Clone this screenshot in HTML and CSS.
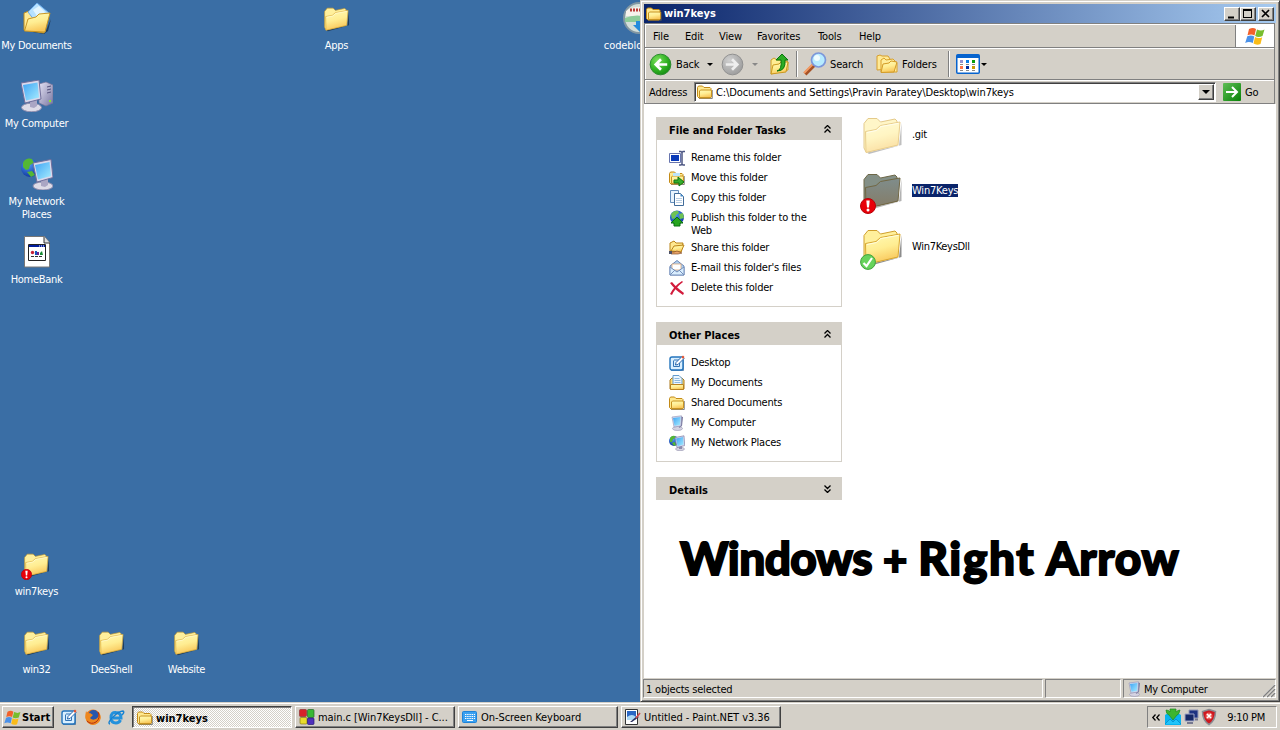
FILE: index.html
```html
<!DOCTYPE html>
<html lang="en">
<head>
<meta charset="utf-8">
<title>win7keys</title>
<link rel="stylesheet" href="styles.css">
</head>
<body>
<svg class="defs" width="0" height="0" aria-hidden="true">
  <defs>
    <linearGradient id="gFolder" x1="0" y1="0" x2="0.3" y2="1"><stop offset="0" stop-color="#fffbb8"/><stop offset=".55" stop-color="#ffed92"/><stop offset="1" stop-color="#f9c85c"/></linearGradient>
    <linearGradient id="gDark" x1="0" y1="0" x2="0" y2="1"><stop offset="0" stop-color="#7f8d8c"/><stop offset="1" stop-color="#857c66"/></linearGradient>
    <linearGradient id="gScreen" x1="0" y1="0" x2="1" y2="1"><stop offset="0" stop-color="#3fa4f4"/><stop offset="1" stop-color="#a6ecff"/></linearGradient>
    <linearGradient id="gCase" x1="0" y1="0" x2="1" y2="1"><stop offset="0" stop-color="#e6e4f6"/><stop offset="1" stop-color="#77759f"/></linearGradient>
    <radialGradient id="gGlobe" cx=".4" cy=".3" r=".8"><stop offset="0" stop-color="#4f9cf6"/><stop offset="1" stop-color="#0a2c96"/></radialGradient>
    <radialGradient id="gGreen" cx=".35" cy=".3" r=".8"><stop offset="0" stop-color="#7be05c"/><stop offset=".6" stop-color="#2fb021"/><stop offset="1" stop-color="#128612"/></radialGradient>
    <radialGradient id="gGrey" cx=".35" cy=".3" r=".8"><stop offset="0" stop-color="#cfcfcf"/><stop offset="1" stop-color="#999"/></radialGradient>
    <linearGradient id="gGo" x1="0" y1="0" x2="1" y2="1"><stop offset="0" stop-color="#5fbd55"/><stop offset="1" stop-color="#078207"/></linearGradient>
  </defs>
  <symbol id="folder" viewBox="0 0 40 38">
    <path d="M4 35.5 36 28.500 38.500 6v22L6 37z" fill="#000" opacity=".45"/>
    <path d="M1 6.500 5 1.500h9l3.500 3.500L32 2l2 2v24L3 35 1 31z" fill="#fff09c" stroke="#cf9f2c"/>
    <path d="M2.500 14.500 13 12.500l4.500-4L37 5l-2 23L3 35.500z" fill="url(#gFolder)" stroke="#d8a731"/>
    <path d="M4 15.500 13.500 13.500l4.500-4L35.500 6.300" fill="none" stroke="#fffde0"/>
  </symbol>
  <symbol id="folder-dark" viewBox="0 0 40 38">
    <path d="M4 35.500 36 28.500 38.500 6v22L6 37z" fill="#000" opacity=".3"/>
    <path d="M1 6.500 5 1.500h9l3.500 3.500L32 2l2 2v24L3 35 1 31z" fill="#849087" stroke="#6e6848"/>
    <path d="M2.500 14.500 13 12.500l4.500-4L37 5l-2 23L3 35.500z" fill="url(#gDark)" stroke="#716743"/>
  </symbol>
  <symbol id="sfolder" viewBox="0 0 16 16">
    <path d="M2 14.500h13.300V6" fill="none" stroke="#555" opacity=".7"/>
    <path d="M.5 12.500v-9l1-1.500h4l1.500 1.500h6l1 1v8l-1 1.500H2z" fill="#ffe990" stroke="#c38a17"/>
    <path d="M2.500 13.500V7l1-1h10.500l.5 1v6l-.5.500z" fill="url(#gFolder)" stroke="#c89422"/>
  </symbol>
  <symbol id="alert" viewBox="0 0 16 16">
    <circle cx="8" cy="8" r="7.500" fill="#e80009" stroke="#b80007"/><path d="M6.300 2.500h3.400L9 9.500H7z" fill="#fff"/><circle cx="8" cy="12" r="1.500" fill="#fff"/>
  </symbol>
  <symbol id="check" viewBox="0 0 16 16">
    <circle cx="8" cy="8" r="7.400" fill="#67d35c" stroke="#42a33d"/><path d="M3.500 9 6.500 12 12 4" fill="none" stroke="#fff" stroke-width="2.200"/>
  </symbol>
  <symbol id="docs" viewBox="0 0 32 32">
    <path d="M6 29 24 31l6-14-3 12-4 3z" opacity=".45"/>
    <path d="M3 28V11l5-2 5 2 12-2 3 3-5 19z" fill="#ffe993" stroke="#b98b21"/>
    <path d="M7 10 16 1l12 10-11 12z" fill="#b6e1ff" stroke="#6cabea"/><path d="m12 8 6-4 6 6-6 7z" fill="#e2f5ff"/>
    <path d="M3.500 29 7 17l8-2 3-3 11-1-5 19z" fill="url(#gFolder)" stroke="#c99623"/>
  </symbol>
  <symbol id="computer" viewBox="0 0 32 32">
    <path d="M18 4l7-2 7 3v18l-7 3-7-3z" fill="url(#gCase)" stroke="#777399" stroke-width=".7"/><path d="m26 7 4-1M26 10l4-1M26 13l4-1" stroke="#55527d"/><path d="M28 20h2v2h-2z" fill="#8bea25"/>
    <ellipse cx="10.500" cy="27.500" rx="10" ry="4.300" fill="#dddbe7" stroke="#918eae"/><path d="m9 20 7-1v7l-3 2-4-1z" fill="#aaa6c4"/>
    <path d="M0 3 18 0l2 19-16 4z" fill="#d9d8ec" stroke="#716f9b"/><path d="M2 5 16.500 2.500 18 17.500 5 20.500z" fill="url(#gScreen)"/>
  </symbol>
  <symbol id="network" viewBox="0 0 32 32">
    <circle cx="9" cy="10" r="9" fill="url(#gGlobe)"/><path d="M2 5c2-5 7-5 9-4l2 4-4 2-1 4-3 1-3-3zm4 9 5-1 3 4-4 2z" fill="#54b734"/>
    <ellipse cx="22" cy="28" rx="10" ry="4" fill="#dddbe7" stroke="#918eae"/><path d="m20 21 7-1v7l-3 2-4-1z" fill="#aaa6c4"/>
    <path d="M12 5 30 1.500l2 18L16 24z" fill="#d9d8ec" stroke="#716f9b"/><path d="M14 7 28.500 4 30 18l-13 3.500z" fill="url(#gScreen)"/>
  </symbol>
  <symbol id="snet" viewBox="0 0 16 16">
    <circle cx="5" cy="6" r="5" fill="url(#gGlobe)"/><path d="M1 3q2-3 5-2l1 2-3 1-1 3-2 0zm2 5 3-1 1 3-2 1z" fill="#54b734"/>
    <ellipse cx="11" cy="14" rx="4.500" ry="1.700" fill="#d5d3e2" stroke="#9693af" stroke-width=".6"/><path d="M10 11h3v3h-3z" fill="#8c8bac"/>
    <path d="M6 2.500 15 .8l.7 9.800L8 12.500z" fill="#d6dbf0" stroke="#7f7da6" stroke-width=".7"/><path d="m7 3.500 7-1.400.6 7.500-6 1.600z" fill="url(#gScreen)"/>
  </symbol>
  <symbol id="spc" viewBox="0 0 16 16">
    <ellipse cx="8.500" cy="13.500" rx="5" ry="2" fill="#d5d3e2" stroke="#9693af" stroke-width=".6"/><path d="M12 1.500l2 .5-1 9-3 2z" fill="#77769c"/><path d="M3 2 12.500.8 12 11 5 12z" fill="#d6dbf0" stroke="#9190b4" stroke-width=".6"/><path d="M4 3l7.500-1L11 10l-5.500.800z" fill="url(#gScreen)"/>
  </symbol>
  <symbol id="winflag" viewBox="0 0 20 18">
    <path d="M4 2q4-2 7 0L9.500 8.500q-3-2-7-.2z" fill="#f2612b"/><path d="M12 2.500q4 2 7.500 0L17.500 9q-4 2-7.300 0z" fill="#77bd2e"/><path d="M2.300 9.200q4-1.600 7 .2L7.800 16q-4-2-7.600 0z" fill="#4a91e9"/><path d="M10 10q3.500 2 7.200.2L15.500 17q-4 1.500-7-.5z" fill="#fabc19"/>
  </symbol>
  <symbol id="deskicon" viewBox="0 0 16 16">
    <path d="M2 15.500h12.500V5" fill="none" stroke="#174b83" opacity=".6"/>
    <rect x="1" y="2" width="13" height="13" rx="2" fill="#d9efff" stroke="#2374bd" stroke-width="1.400"/><path d="M5 5h5M4.500 5.500v6h6V8" fill="none" stroke="#3575b5"/><path d="m6.500 10 .5-2.500L13 1.500 15 3.500 9 9.500z" fill="#fff" stroke="#2665ac"/><path d="m12.500 2 1.500-1.500 1.500 1.500L14 4z" fill="#e6512c"/>
  </symbol>
  <symbol id="chev" viewBox="0 0 8 8"><path d="M.5 3.500 3.500.5l3 3M.5 7.500 3.500 4.500l3 3" fill="none" stroke="#000" stroke-width="1.300"/></symbol>
</svg>

<main class="desktop">
  <div class="shortcut docs"><svg class="i32"><use href="#docs"/></svg><span>My Documents</span></div>
  <div class="shortcut comp"><svg class="i32"><use href="#computer"/></svg><span>My Computer</span></div>
  <div class="shortcut netw"><svg class="i32"><use href="#network"/></svg><span>My Network<br>Places</span></div>
  <div class="shortcut bank"><svg class="i32" viewBox="0 0 32 32"><path d="M3.500.5h20l5 6v24.500h-25z" fill="#fff" stroke="#777"/><path d="M23 1v6h6" fill="#ddd" stroke="#333"/><path d="M7.500 8.500h17v16h-17z" fill="#fff" stroke="#222"/><path d="M8 9h16v2H8z" fill="#001c9c"/><path d="M18 10h5" stroke="#fff" stroke-dasharray="1"/><circle cx="11.500" cy="16.500" r="1.700" fill="#c72036"/><path d="M14 15h2v4h-2z" fill="#1657be"/><path d="M16 16h2v3h-2z" fill="#6a238d"/><path d="M19 17l2-2 1 4h-3z" fill="#168b33"/><path d="M10 20.500h12" stroke="#333" stroke-dasharray="3 1"/></svg><span>HomeBank</span></div>
  <div class="shortcut apps"><svg class="fold"><use href="#folder"/></svg><span>Apps</span></div>
  <div class="shortcut code"><svg class="i32" viewBox="0 0 32 32"><circle cx="18" cy="16" r="15" fill="#d4dfd9" stroke="#8297a3" stroke-width="2"/><path d="M5 9Q16 1 30 9v5H5z" fill="#f6f2ec"/><path d="M9 8h18" stroke="#b93b36" stroke-width="3" stroke-dasharray="2 1"/><path d="M4 16q11-5 27 0v4H4z" fill="#8dcc9a"/><path d="M15 19h7v4h4l-7 7-7-7h3z" fill="#238cdc"/></svg><span>codeblocks</span></div>
  <div class="shortcut keys"><svg class="fold"><use href="#folder"/></svg><svg class="badge"><use href="#alert"/></svg><span>win7keys</span></div>
  <div class="shortcut w32"><svg class="fold"><use href="#folder"/></svg><span>win32</span></div>
  <div class="shortcut dee"><svg class="fold"><use href="#folder"/></svg><span>DeeShell</span></div>
  <div class="shortcut web"><svg class="fold"><use href="#folder"/></svg><span>Website</span></div>

  <section class="window">
    <header class="titlebar"><svg class="i16"><use href="#sfolder"/></svg><b>win7keys</b>
      <div class="controls">
        <i class="ctl"><svg viewBox="0 0 14 12"><path d="M3 8.500h6v2H3z"/></svg></i><i class="ctl"><svg viewBox="0 0 14 12"><path d="M2 1h9v9H2zM3 3v6h7V3z" fill-rule="evenodd"/></svg></i><i class="ctl close"><svg viewBox="0 0 14 12"><path d="m3 2 7 7m0-7-7 7" stroke="#000" stroke-width="1.700"/></svg></i>
      </div>
    </header>
    <div class="bars">
      <nav class="menu"><span class="m1">File</span><span class="m2">Edit</span><span class="m3">View</span><span class="m4">Favorites</span><span class="m5">Tools</span><span>Help</span><div class="brand"><svg width="20" height="18"><use href="#winflag"/></svg></div></nav>
      <div class="toolbar">
        <svg class="nav" viewBox="0 0 24 24"><circle cx="12" cy="12" r="10.800" fill="url(#gGreen)" stroke="#27882a"/><path d="M19 12H7m5.500-5.500L7 12l5.500 5.500" fill="none" stroke="#fff" stroke-width="2.800"/></svg><span class="back">Back</span><i class="drop"></i>
        <svg class="nav fwd" viewBox="0 0 24 24"><circle cx="12" cy="12" r="10.800" fill="url(#gGrey)" stroke="#8e8e8e"/><path d="M5 12h12m-5.500-5.500L17 12l-5.500 5.500" fill="none" stroke="#eee" stroke-width="2.800"/></svg><i class="drop off"></i>
        <svg class="up" viewBox="0 0 20 24"><path d="M2 22V8l3-2 3 2h8l3 2v8z" fill="#ffed93" stroke="#cd9e27"/><path d="m2 22 2-9 6-1 2-2h7l-2 10z" fill="url(#gFolder)" stroke="#cb991f"/><path d="M8 19q5-1 4-11H7l6-6 6 6h-3q1 11-8 11z" fill="#2cac24" stroke="#08770c"/></svg>
        <i class="sep"></i>
        <svg class="mag" viewBox="0 0 24 24"><path d="M2 22 11 13" stroke="#a65125" stroke-width="4"/><path d="M1 21 10 12" stroke="#f39b65" stroke-width="2"/><circle cx="15.500" cy="8" r="7" fill="#b7ebff" stroke="#7c97da" stroke-width="1.700"/><circle cx="14" cy="6" r="3" fill="#effcff"/></svg><span class="search">Search</span>
        <svg class="folders" viewBox="0 0 22 20"><path d="M1 15V2l3-1 2 1h6l2 3v10l-13 1z" fill="#ffe995" stroke="#d79e2c"/><path d="M5 18V6l3-2 2 2 7-1 4 4v9z" fill="#ffed9b" stroke="#d9a12a"/><path d="M5 18.500 7 10l6-1 2-2 6 1-3 10z" fill="url(#gFolder)" stroke="#d39b25"/></svg><span class="foldtxt">Folders</span>
        <i class="sep second"></i>
        <svg class="views" viewBox="0 0 24 20"><rect x=".75" y=".75" width="22.500" height="18.500" rx="1" fill="#fff" stroke="#0663ce" stroke-width="1.500"/><path d="M1 1h22v3H1z" fill="#0663ce"/><path d="M4 6h3v3H4z" fill="#9593cf"/><path d="M10 6h3v3h-3z" fill="#087de6"/><path d="M16 6h3v3h-3z" fill="#089d0c"/><path d="M4 12h3v3H4z" fill="#ff7447"/><path d="M10 12h3v3h-3z" fill="#002d9e"/><path d="M16 12h3v3h-3z" fill="#c99900"/><path d="M4 10.500h3m3 0h3m3 0h3M4 16.500h3m3 0h3m3 0h3" stroke="#888"/></svg><i class="drop last"></i>
      </div>
      <div class="address"><span>Address</span><div class="field"><svg class="i16"><use href="#sfolder"/></svg><span class="path">C:\Documents and Settings\Pravin Paratey\Desktop\win7keys</span><i class="combo"><i class="drop"></i></i></div><svg class="go" viewBox="0 0 18 18"><rect width="18" height="18" rx="1" fill="url(#gGo)"/><path d="M3 9h11M9 4l5 5-5 5" fill="none" stroke="#fff" stroke-width="2"/></svg><span>Go</span></div>
    </div>
    <div class="client">
      <aside class="side">
        <section class="panel tasks"><h2>File and Folder Tasks<svg class="chev"><use href="#chev"/></svg></h2>
          <ul>
            <li><svg class="i16" viewBox="0 0 16 16"><path d="M.5 3.500h11v9H.5z" fill="#fff" stroke="#6875ae"/><path d="M2 5h8v6H2z" fill="#0a3ab8"/><path d="M10 1.500h2l1 1 1-1h2M13 2v12m-3 1h2l1-1 1 1h2" fill="none" stroke="#4c5683" stroke-width="1.500"/></svg><span>Rename this folder</span></li>
            <li><svg class="i16" viewBox="0 0 16 16"><use href="#sfolder"/><path d="M5 10h4V7l6 5-5 4v-3H5z" fill="#36ae2c" stroke="#0e7415"/><path d="M4 3h7v3H4z" fill="#bce4fb"/></svg><span>Move this folder</span></li>
            <li><svg class="i16" viewBox="0 0 16 16"><path d="M1.500.5h8v12h-8z" fill="#e9f4fd" stroke="#668fbd"/><path d="M5.500 3.500h6l3 3v9h-9z" fill="#fff" stroke="#416c9a"/><path d="M11.500 3.500v3h3" fill="#4589c8"/><path d="M7 8.500h6m-6 2h6m-6 2h6" stroke="#b8cde2"/></svg><span>Copy this folder</span></li>
            <li class="wrap"><svg class="i16" viewBox="0 0 16 16"><circle cx="8" cy="7.500" r="7" fill="url(#gGlobe)"/><path d="M2 4q3-4 7-3l1 2-3 2-1 3-3 1zm8 0 4-1 1 5-4 1z" fill="#6fc354"/><path d="m8 7 6 6h-3v3H5v-3H2z" fill="#26a51e" stroke="#087011"/></svg><span>Publish this folder to the<br>Web</span></li>
            <li><svg class="i16" viewBox="0 0 16 16"><path d="M1 11V3l4-2 2 2h7l-2 9z" fill="#ffe891" stroke="#bb8418"/><path d="m2 11 3-5 10-1-3 7z" fill="url(#gFolder)" stroke="#bb8418"/><path d="M2 12h3l3-1 5 2-4 1H2z" fill="#e9a468" stroke="#87502c" stroke-width=".7"/><path d="M0 11h3v3H0z" fill="#4c5168"/></svg><span>Share this folder</span></li>
            <li><svg class="i16" viewBox="0 0 16 16"><path d="M1 6 8 .5 15 6v9H1z" fill="#aed0f1" stroke="#6e88b6"/><path d="M3 4h9v6H3z" fill="#fff" stroke="#dd9e65" stroke-width=".7"/><path d="m1 7 7 5 7-5v8H1z" fill="#d9edfd" stroke="#7590bc"/><path d="m1 15 5-5m9 5-5-5" stroke="#7590bc"/></svg><span>E-mail this folder's files</span></li>
            <li><svg class="i16" viewBox="0 0 16 16"><path d="m1 3 2-1q4 5 12 11l-1 2Q6 10 1 3z" fill="#d21b3c"/><path d="M14 2Q6 8 3 15l-2-1Q5 6 13 1z" fill="#d21b3c"/></svg><span>Delete this folder</span></li>
          </ul>
        </section>
        <section class="panel places"><h2>Other Places<svg class="chev"><use href="#chev"/></svg></h2>
          <ul>
            <li><svg class="i16"><use href="#deskicon"/></svg><span>Desktop</span></li>
            <li><svg class="i16" viewBox="0 0 16 16"><path d="M1 14V5l2-2h10l2 2v9z" fill="#ffdc70" stroke="#ad791c"/><path d="M4 .5h6l3 3V10H4z" fill="#edf7ff" stroke="#649cce"/><path d="M5.500 3.500h5m-5 2h6m-6 2h6" stroke="#8eb9df"/><path d="M1.500 9.500h13v5h-13z" fill="url(#gFolder)" stroke="#b78221"/></svg><span>My Documents</span></li>
            <li><svg class="i16"><use href="#sfolder"/></svg><span>Shared Documents</span></li>
            <li><svg class="i16"><use href="#spc"/></svg><span>My Computer</span></li>
            <li><svg class="i16"><use href="#snet"/></svg><span>My Network Places</span></li>
          </ul>
        </section>
        <section class="panel"><h2>Details<svg class="chev flip"><use href="#chev"/></svg></h2></section>
      </aside>
      <div class="files">
        <div class="file"><svg class="big faded"><use href="#folder"/></svg><span>.git</span></div>
        <div class="file"><svg class="big"><use href="#folder-dark"/></svg><svg class="mark"><use href="#alert"/></svg><span class="sel">Win7Keys</span></div>
        <div class="file"><svg class="big"><use href="#folder"/></svg><svg class="mark"><use href="#check"/></svg><span>Win7KeysDll</span></div>
      </div>
      <div class="caption"><span class="c1">Windows</span> <span class="c2">+</span> <span class="c3">Right</span> <span class="c4">Arrow</span></div>
    </div>
    <footer class="status"><div class="sp wide">1 objects selected</div><div class="sp mid"></div><div class="sp end"><svg class="i16"><use href="#spc"/></svg><span>My Computer</span><svg class="grip" viewBox="0 0 13 13"><path d="m0 13 13-13M4 13l9-9M8 13l5-5" stroke="#fff"/><path d="m1 13 12-12M5 13l8-8M9 13l4-4" stroke="#808080" stroke-width="1.500"/></svg></div></footer>
  </section>
</main>

<footer class="taskbar">
  <div class="start"><svg width="17" height="15"><use href="#winflag"/></svg><b>Start</b></div>
  <div class="quick">
    <svg class="i16"><use href="#deskicon"/></svg>
    <svg class="i16" viewBox="0 0 16 16"><circle cx="8" cy="8" r="7.500" fill="#e77618"/><circle cx="8.500" cy="6" r="5" fill="#2857ae"/><path d="M1 2q1 3 4 2l3 2-3 3q2 3 6 1 4-2 3-7 4 7-1 11-5 4-10 0-4-4-2-12z" fill="#ee871e"/><path d="M13 3q3 6-2 10-5 3-9-1" fill="none" stroke="#b32e12"/></svg>
    <svg class="i16" viewBox="0 0 16 16"><path d="M12.500 11q-1.500 3-4.500 3-5 0-5-5.500T8 3.500q5 0 5 5.500H5" fill="none" stroke="#2491dc" stroke-width="3"/><path d="M2 15q-3-1 3-7t10-6q2 1-1 4" fill="none" stroke="#1581d1" stroke-width="1.400"/></svg>
  </div>
  <div class="buttons">
    <div class="task active"><svg class="i16"><use href="#sfolder"/></svg><b>win7keys</b></div>
    <div class="task"><svg class="i16" viewBox="0 0 16 16"><rect x=".5" y=".5" width="7" height="7" rx="1" fill="#d72229" stroke="#8e3030" stroke-width=".7"/><rect x="8.500" y=".5" width="6.500" height="8" rx="1" fill="#38b733" stroke="#276526" stroke-width=".7"/><rect x="1" y="8.500" width="7" height="6.500" rx="1" fill="#e8dc2c" stroke="#85751b" stroke-width=".7"/><rect x="8.500" y="9" width="6.500" height="6.500" rx="1" fill="#4f2fbc" stroke="#251a70" stroke-width=".7"/></svg><span>main.c [Win7KeysDll] - C...</span></div>
    <div class="task"><svg class="i16" viewBox="0 0 16 16"><rect x=".5" y="2.500" width="14" height="11" rx="1" fill="#3aa0f0" stroke="#1f83d8"/><path d="M3 5.500h10M3 7.500h10M3 9.500h10" stroke="#fff" stroke-dasharray="1.400 .8"/><path d="M5 11.500h6" stroke="#fff"/></svg><span>On-Screen Keyboard</span></div>
    <div class="task"><svg class="i16" viewBox="0 0 16 16"><path d="M.5.5h12v15H.5z" fill="#fff" stroke="#333"/><path d="M2 2h9v7H2z" fill="#2b67c4"/><path d="M2 8q5-4 9 0v3H2z" fill="#afd9f5"/><path d="m5 13 7-6 2 1-7 5z" fill="#2c315f"/><path d="m11 9 4-5" stroke="#d14a4d" stroke-width="1.700"/></svg><span>Untitled - Paint.NET v3.36</span></div>
  </div>
  <div class="tray">
    <svg class="more" viewBox="0 0 8 7"><path d="M3.500.5.8 3.500l2.700 3M7.500.5 4.800 3.500l2.700 3" fill="none" stroke="#000" stroke-width="1.300"/></svg>
    <svg class="i16" viewBox="0 0 16 16"><path d="M0 6l3-2h10l3 2v10H0z" fill="#08b4f0"/><path d="m0 15 5-5 3 3 3-3 5 5" fill="#1fc4fa" stroke="#0783c1" stroke-width=".7"/><path d="M1 1q3 0 4 2V0h6v3q2-2 4-2-1 5-3 5l-4 5-4-5Q1 5 1 1z" fill="#3cb52f" stroke="#218a20" stroke-width=".7"/></svg>
    <svg class="i16" viewBox="0 0 16 16"><path d="M6 1h9v8H6z" fill="#1d3281" stroke="#9498b6"/><path d="M2 5h9v7H2z" fill="#152766" stroke="#9ea4c7"/><path d="M4 14h6m2-3.500h3" stroke="#777990" stroke-width="2"/></svg>
    <svg class="i16" viewBox="0 0 16 16"><path d="m8 .5 6.500 2q0 9-6.500 13-6.500-4-6.500-13z" fill="#ce171f" stroke="#8a8d93" stroke-width="1.500"/><circle cx="8" cy="7" r="3.500" fill="#ed5e58"/><path d="m6 5 4 4m0-4L6 9" stroke="#fff" stroke-width="1.700"/></svg>
    <span>9:10 PM</span>
  </div>
</footer>
</body>
</html>
```
FILE: styles.css
```css
* { box-sizing: border-box; }
body { margin: 0; width: 1280px; height: 730px; overflow: hidden; display: flex; flex-direction: column; background: #3a6ea5; color: #000; font: 11px/13px "DejaVu Sans Condensed", "DejaVu Sans", sans-serif; font-stretch: condensed; letter-spacing: -0.3px; white-space: nowrap; }
svg { display: block; flex: none; overflow: visible; }
.defs { position: absolute; }
b, h2 { letter-spacing: 0; }
.i16 { width: 16px; height: 16px; }
.i32 { width: 32px; height: 32px; }

.desktop { position: relative; height: 702px; overflow: hidden; }
.shortcut { position: absolute; width: 75px; height: 64px; display: flex; flex-direction: column; align-items: center; justify-content: flex-start; color: #fff; text-align: center; }
.shortcut > span { margin-top: 5px; }
.shortcut .fold { width: 26px; height: 25px; margin: 5px 0 2px; }
.docs { left: -1px; top: 2px; }
.comp { left: -1px; top: 80px; }
.netw { left: -1px; top: 158px; }
.bank { left: -1px; top: 236px; }
.apps { left: 299px; top: 2px; }
.code { left: 599px; top: 2px; }
.code span { letter-spacing: -0.1px; margin-right: 11px; }
.keys { left: -1px; top: 548px; }
.w32 { left: -1px; top: 626px; }
.dee { left: 74px; top: 626px; }
.web { left: 149px; top: 626px; }
.badge { position: absolute; left: 22px; top: 21px; width: 11px; height: 11px; }

.window { position: absolute; left: 640px; top: 0; width: 640px; height: 702px; padding: 2px; background: #d4d0c8; border: 1px solid; border-color: #d4d0c8 #404040 #404040 #d4d0c8; box-shadow: inset 1px 1px #fff, inset -1px -1px #808080; display: flex; flex-direction: column; }
.titlebar { height: 19px; margin: 1px 1px 0; padding: 0 2px; display: flex; align-items: center; gap: 2px; background: linear-gradient(90deg, #0a246a, #a6caf0); color: #fff; }
.controls { margin-left: auto; display: flex; }
.ctl { width: 16px; height: 14px; background: #d4d0c8; border: 1px solid; border-color: #fff #404040 #404040 #fff; box-shadow: inset -1px -1px #808080; }
.ctl svg { width: 14px; height: 12px; }
.close { margin-left: 2px; }

.bars { margin: 0 2px 0 1px; height: 81px; border: 1px solid #808080; box-shadow: inset 1px 1px #fff; display: flex; flex-direction: column; letter-spacing: -0.15px; }
.menu { height: 24px; border-bottom: 1px solid #808080; display: flex; align-items: center; padding-left: 8px; }
.menu > span { padding-top: 1px; }
.m1 { width: 32px; } .m2 { width: 34px; } .m3 { width: 38px; } .m4 { width: 61px; } .m5 { width: 41px; }
.brand { margin-left: auto; width: 39px; height: 22px; background: #fff; border-left: 1px solid #808080; display: flex; align-items: center; justify-content: center; }
.toolbar { height: 32px; border-top: 1px solid #fff; border-bottom: 1px solid #808080; display: flex; align-items: center; padding-left: 4px; }
.nav { width: 23px; height: 23px; }
.back { margin-left: 4px; width: 31px; }
.drop { width: 0; height: 0; border: 3px solid transparent; border-top-color: #000; border-bottom: 0; }
.off { border-top-color: #888; margin-left: 8px; }
.fwd { margin-left: 8px; }
.up { width: 20px; height: 24px; margin-left: 11px; }
.sep { width: 2px; height: 26px; margin-left: 7px; background: linear-gradient(90deg, #808080 50%, #fff 50%); }
.mag { width: 24px; height: 24px; margin-left: 5px; }
.search { margin-left: 3px; width: 46px; }
.folders { width: 22px; height: 20px; }
.foldtxt { margin-left: 4px; width: 39px; }
.second { margin-left: 7px; }
.views { width: 24px; height: 20px; margin-left: 6px; }
.last { margin-left: 1px; }
.address { flex: 1; border-top: 1px solid #fff; display: flex; align-items: center; padding: 1px 0 1px 4px; }
.address > span:first-child { width: 40px; }
.field { margin-left: 5px; width: 522px; height: 20px; background: #fff; border: 1px solid; border-color: #808080 #fff #fff #808080; box-shadow: inset 1px 1px #404040; display: flex; align-items: center; padding: 1px; }
.field .i16 { margin: 0 3px 0 1px; }
.path { letter-spacing: -0.1px; }
.combo { margin-left: auto; width: 16px; height: 16px; background: #d4d0c8; border: 1px solid; border-color: #fff #404040 #404040 #fff; box-shadow: inset -1px -1px #808080; display: flex; align-items: center; justify-content: center; }
.combo .drop { border-width: 4px 4px 0; }
.go { width: 18px; height: 18px; margin: 0 4px 0 7px; }

.client { position: relative; flex: 1; margin: 0 1px 0 1px; padding: 13px 0 0 12px; background: #fff; display: flex; }
.side { width: 186px; display: flex; flex-direction: column; gap: 15px; }
.panel { border: 1px solid #d4d0c8; }
.tasks { height: 190px; }
.places { height: 140px; }
.panel h2 { height: 22px; margin: 0; padding: 2px 9px 0 12px; background: #d4d0c8; font-size: 11px; font-weight: bold; display: flex; align-items: center; justify-content: space-between; }
.panel:last-child h2 { height: 21px; padding-top: 3px; }
.chev { width: 8px; height: 8px; margin-bottom: 3px; }
.flip { transform: scaleY(-1); }
.panel ul { list-style: none; margin: 0; padding: 8px 0 0 12px; letter-spacing: -0.2px; }
.panel li { height: 20px; padding-top: 2px; display: flex; gap: 6px; }
.panel li > span { padding-top: 1px; }
.panel li.wrap { height: 30px; }
.files { margin-left: 18px; }
.file { position: relative; height: 56px; display: flex; gap: 9px; padding-left: 3px; }
.file > span { align-self: flex-start; margin-top: 11px; }
.big { width: 40px; height: 38px; }
.faded { opacity: .55; }
.mark { position: absolute; left: 0; top: 25px; width: 16px; height: 16px; }
.file .sel { background: #0a246a; color: #fff; letter-spacing: -0.2px; }
.caption { position: absolute; left: 36px; top: 424px; font: 900 46px/60px Lato, sans-serif; letter-spacing: 0; -webkit-text-stroke: 1.800px #000; }
.c1 { letter-spacing: -0.6px; }
.c2 { font-size: 42px; }
.c3 { letter-spacing: 1.600px; }
.c4 { letter-spacing: 0.700px; }

.status { height: 21px; margin: 0 1px 0 0; padding-top: 1px; display: flex; gap: 2px; }
.sp { height: 19px; border: 1px solid; border-color: #808080 #fff #fff #808080; display: flex; align-items: center; padding: 1px 0 0 2px; }
.wide { width: 400px; letter-spacing: -0.2px; } .mid { width: 76px; }
.end { flex: 1; position: relative; gap: 2px; }
.grip { position: absolute; right: 0; bottom: 0; width: 13px; height: 13px; }

.taskbar { height: 28px; padding: 2px 3px 0 2px; background: #d4d0c8; box-shadow: inset 0 1px #d4d0c8, inset 0 2px #fff; display: flex; align-items: center; }
.start { width: 52px; height: 22px; border: 1px solid; border-color: #fff #404040 #404040 #fff; box-shadow: inset -1px -1px #808080; display: flex; align-items: center; gap: 1px; padding-left: 1px; }
.quick { display: flex; gap: 7.500px; margin-left: 7px; }
.buttons { display: flex; gap: 3px; margin-left: 8px; letter-spacing: -0.06px; }
.task { width: 160px; height: 22px; border: 1px solid; border-color: #fff #404040 #404040 #fff; box-shadow: inset -1px -1px #808080; display: flex; align-items: center; gap: 3px; padding-left: 3px; }
.active { border-color: #404040 #fff #fff #404040; box-shadow: inset 1px 1px #808080; background: repeating-conic-gradient(#fff 0 25%, #d4d0c8 0 50%) 0 0 / 2px 2px; padding: 2px 0 0 4px; }
.tray { margin-left: auto; width: 130px; height: 22px; border: 1px solid; border-color: #808080 #fff #fff #808080; display: flex; align-items: center; gap: 2px; padding-left: 4px; }
.more { width: 8px; height: 7px; margin-right: 3px; }
.tray span { margin-left: auto; padding-right: 11px; }
```
